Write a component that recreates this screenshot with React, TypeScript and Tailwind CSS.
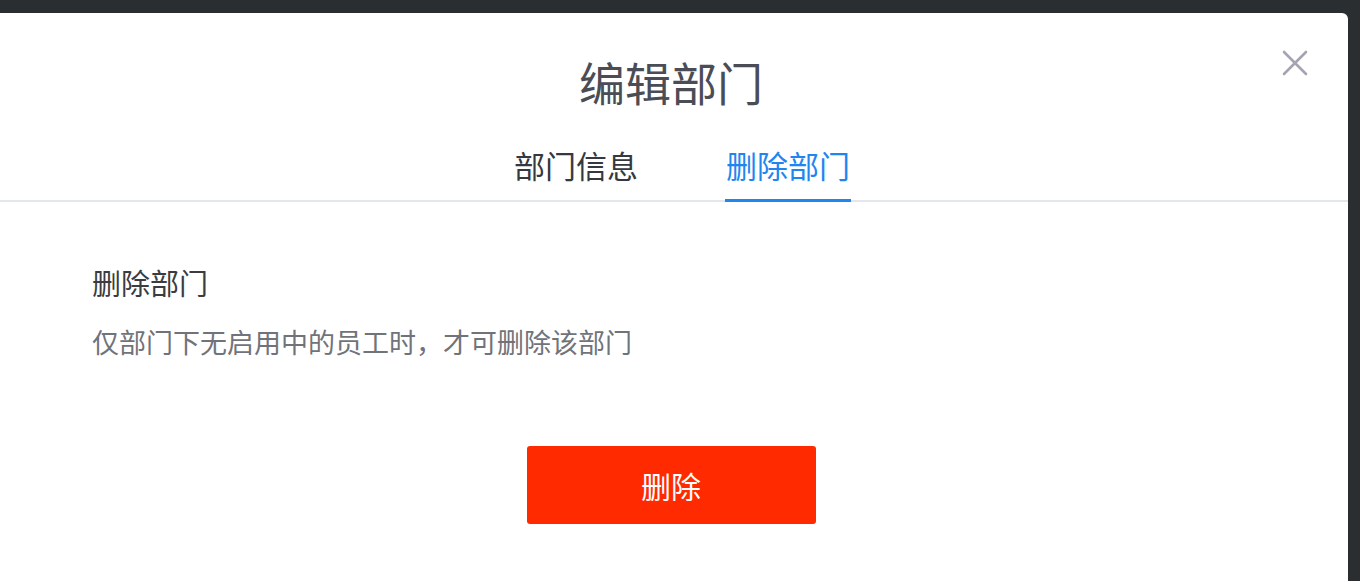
import React, { useState } from "react";

const font = { fontFamily: '"Noto Sans CJK SC", "Noto Sans", sans-serif' };

const tabs = [
  { key: "info", label: "部门信息" },
  { key: "delete", label: "删除部门" },
];

const App = () => {
  const [active, setActive] = useState("delete");

  return (
    <div
      className="w-[1360px] h-[581px] bg-[#2a2e31] overflow-hidden flex pt-[13px] pr-[12px]"
      style={font}
    >
      {/* Modal */}
      <div className="relative flex-1 -ml-[6px] bg-white rounded-tr-[6px] flex flex-col">
        <button className="absolute top-[37px] right-[40px] w-[26px] h-[26px] text-[#a3a6b0]">
          <svg viewBox="0 0 26 26" width="26" height="26" fill="none" stroke="currentColor" strokeWidth="2.6" strokeLinecap="round">
            <path d="M2 2 L24 24 M24 2 L2 24" />
          </svg>
        </button>

        <h1 className="mt-[45px] text-center text-[46px] leading-none font-normal text-[#4a4d55]">
          编辑部门
        </h1>

        {/* Tabs */}
        <div className="mt-[45px] flex justify-center pl-[22px] gap-[86px] border-b-2 border-[#e4e6ee]">
          {tabs.map((tab) => (
            <button
              key={tab.key}
              onClick={() => setActive(tab.key)}
              className={
                tab.key === active
                  ? "text-[31px] leading-none px-[1px] pb-[19px] -mb-[2px] border-b-[3px] border-[#1f86f0] text-[#1f86f0]"
                  : "text-[31px] leading-none px-[1px] pb-[19px] -mb-[2px] border-b-[3px] border-transparent text-[#35383e]"
              }
            >
              {tab.label}
            </button>
          ))}
        </div>

        {/* Content */}
        <div className="flex flex-col pl-[98px]">
          <h2 className="mt-[66px] text-[29px] leading-none text-[#3a3c40]">删除部门</h2>
          <p className="mt-[31px] text-[27px] leading-none text-[#707379]">
            仅部门下无启用中的员工时，才可删除该部门
          </p>
        </div>

        <button className="mt-[91px] self-center w-[289px] h-[78px] rounded-[3px] bg-[#ff2a00] text-white text-[30px] leading-none">
          删除
        </button>
      </div>
    </div>
  );
};

export default App;
